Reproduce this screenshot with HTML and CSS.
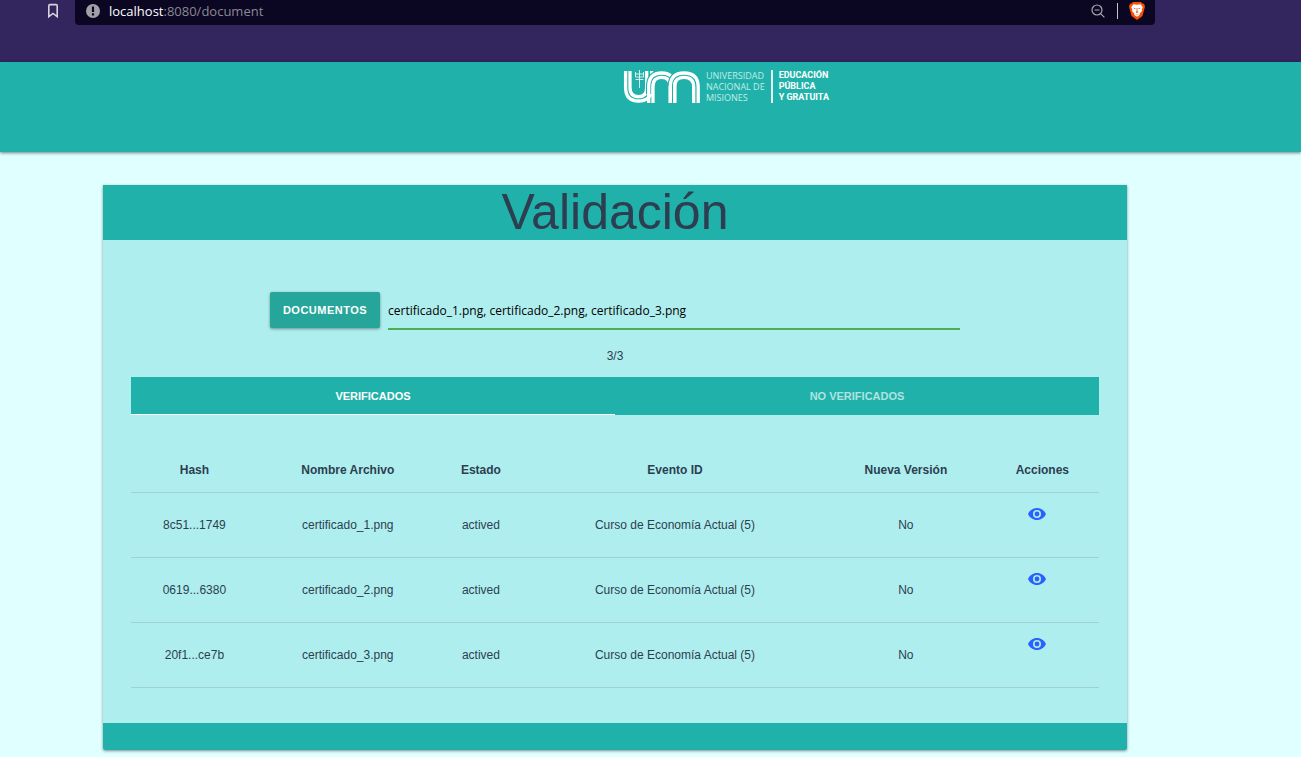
FILE: index.html
```html
<!DOCTYPE html>
<html lang="es">
<head>
<meta charset="utf-8">
<title>Validación</title>
<link rel="stylesheet" href="styles.css">
</head>
<body>
<div class="browser">
  <button class="icon-button bookmark" type="button" aria-label="Marcador">
    <svg width="12" height="16" viewBox="0 0 12 16" fill="none" stroke="#d6d3df" stroke-width="1.6"><path d="M1.8 13.6V2.8Q1.8 1.6 3 1.6H9Q10.200 1.600 10.200 2.800V13.600L6 10.400Z"/></svg>
  </button>
  <div class="address">
    <svg width="14" height="14" viewBox="0 0 14 14"><circle cx="7" cy="7" r="7" fill="#a0a1a8"/><path d="M5.900 2.500H8.100V8H5.900ZM5.900 9.300H8.100V11.500H5.900Z" fill="#0b0622"/></svg>
    <div class="url"><span class="host">localhost</span>:8080/document</div>
    <button class="icon-button" type="button" aria-label="Zoom">
      <svg width="14" height="14" viewBox="0 0 14 14" fill="none" stroke="#aaa8b4" stroke-width="1.200"><circle cx="6" cy="6" r="5"/><path d="M3.500 6H8.500M9.600 9.600L13.400 13.400"/></svg>
    </button>
    <span class="divider"></span>
    <button class="icon-button" type="button" aria-label="Brave">
      <svg width="16" height="18" viewBox="0 0 16 18"><path d="M4 0H12L13.500 1.500L15 1.800L16 4.500L15.500 6.500L13.400 14L8 18L2.600 14L.5 6.500L0 4.500L1 1.800L2.500 1.500Z" fill="#fb5004"/><path d="M4.500 2.200L8 2.800L11.500 2.200L13.800 5.200L12.700 7.500L13 9L10.800 11.200L10.600 13L8 14.800L5.400 13L5.200 11.200L3 9L3.300 7.500L2.200 5.200Z" fill="#fff"/><path d="M4 5.800L6.600 6.200L6.200 7.200ZM12 5.800L9.400 6.200L9.800 7.200ZM7.600 6H8.400V9.300L9.600 10L8 10.900L6.400 10L7.600 9.300ZM6 12L8 12.700L10 12L8 13.200Z" fill="#c9541f"/></svg>
    </button>
  </div>
</div>

<header class="topbar">
  <a class="brand" href="#">
    <svg width="78" height="34" viewBox="0 0 78 34" fill="none" stroke="#fff" stroke-width="3.300">
      <path d="M2.600 1V17.500Q2.600 31 15.500 31Q28.700 31 28.700 17.500V1"/>
      <path d="M7 1V17.500Q7 26.700 15.500 26.700Q23.700 26.700 23.700 17.500V1"/>
      <path stroke="#20b2aa" stroke-width="5.500" d="M25.700 24V17Q25.700 3 38.700 3Q45 3 48.500 7"/>
      <path d="M25.700 33V17Q25.700 3 38.700 3Q51.700 3 51.700 17V33"/>
      <path d="M30 33V17Q30 7.300 38.700 7.300Q47.300 7.300 47.300 17V33"/>
      <path stroke="#20b2aa" stroke-width="5.500" d="M47.300 16Q47.600 3 61 3"/>
      <path d="M47.300 33V17Q47.300 3 61 3Q75.200 3 75.200 17V33"/>
      <path d="M51.700 33V17Q51.700 7.300 61 7.300Q70.700 7.300 70.700 17V33"/>
      <path stroke-width="1" stroke-opacity=".8" d="M16.500 0V18M12.500 2V7H20.500V2M12.500 4H20.500M12.500 9.500H20.500"/>
    </svg>
    <span class="name">UNIVERSIDAD<br>NACIONAL DE<br>MISIONES</span>
    <span class="motto">EDUCACIÓN<br>PÚBLICA<br>Y GRATUITA</span>
  </a>
</header>

<main class="page">
  <section class="card">
    <h1 class="title">Validación</h1>
    <div class="body">
      <div class="file-row">
        <button class="upload" type="button">DOCUMENTOS</button>
        <input class="files" type="text" aria-label="Documentos" value="certificado_1.png, certificado_2.png, certificado_3.png">
      </div>
      <p class="count">3/3</p>
      <nav class="tabs">
        <a class="tab active" href="#verificados">VERIFICADOS</a>
        <a class="tab" href="#no-verificados">NO VERIFICADOS</a>
      </nav>
      <table class="results" id="verificados">
        <colgroup><col class="c-hash"><col class="c-file"><col class="c-state"><col class="c-event"><col class="c-version"><col class="c-actions"></colgroup>
        <thead>
          <tr><th>Hash</th><th>Nombre Archivo</th><th>Estado</th><th>Evento ID</th><th>Nueva Versión</th><th>Acciones</th></tr>
        </thead>
        <tbody>
          <tr><td>8c51...1749</td><td>certificado_1.png</td><td>actived</td><td>Curso de Economía Actual (5)</td><td>No</td><td class="actions"><button class="icon-button" type="button" aria-label="Ver certificado_1.png"><svg width="18" height="12" viewBox="0 0 18 12"><path fill="#2962ff" fill-rule="evenodd" d="M9 0C5 0 1.600 2.500 0 6C1.600 9.500 5 12 9 12S16.400 9.500 18 6C16.400 2.500 13 0 9 0ZM9 10A4 4 0 1 1 9 2A4 4 0 0 1 9 10ZM9 3.600A2.400 2.400 0 1 0 9 8.400A2.400 2.400 0 0 0 9 3.600Z"/></svg></button></td></tr>
          <tr><td>0619...6380</td><td>certificado_2.png</td><td>actived</td><td>Curso de Economía Actual (5)</td><td>No</td><td class="actions"><button class="icon-button" type="button" aria-label="Ver certificado_2.png"><svg width="18" height="12" viewBox="0 0 18 12"><path fill="#2962ff" fill-rule="evenodd" d="M9 0C5 0 1.600 2.500 0 6C1.600 9.500 5 12 9 12S16.400 9.500 18 6C16.400 2.500 13 0 9 0ZM9 10A4 4 0 1 1 9 2A4 4 0 0 1 9 10ZM9 3.600A2.400 2.400 0 1 0 9 8.400A2.400 2.400 0 0 0 9 3.600Z"/></svg></button></td></tr>
          <tr><td>20f1...ce7b</td><td>certificado_3.png</td><td>actived</td><td>Curso de Economía Actual (5)</td><td>No</td><td class="actions"><button class="icon-button" type="button" aria-label="Ver certificado_3.png"><svg width="18" height="12" viewBox="0 0 18 12"><path fill="#2962ff" fill-rule="evenodd" d="M9 0C5 0 1.600 2.500 0 6C1.600 9.500 5 12 9 12S16.400 9.500 18 6C16.400 2.500 13 0 9 0ZM9 10A4 4 0 1 1 9 2A4 4 0 0 1 9 10ZM9 3.600A2.400 2.400 0 1 0 9 8.400A2.400 2.400 0 0 0 9 3.600Z"/></svg></button></td></tr>
        </tbody>
      </table>
    </div>
    <footer class="card-footer"></footer>
  </section>
</main>
</body>
</html>
```

FILE: styles.css
```css
* { box-sizing: border-box; }

body {
  margin: 0;
  background: #e0ffff;
  color: #2c3e50;
  font-family: "Liberation Sans", Arial, sans-serif;
  font-size: 12px;
}

svg { display: block; }

.icon-button {
  padding: 0;
  border: 0;
  background: none;
  cursor: pointer;
}

/* Browser bar */
.browser {
  display: flex;
  align-items: flex-start;
  gap: 16px;
  height: 62px;
  padding-right: 146px;
  padding-left: 47px;
  background: #33265f;
}

.bookmark { padding-top: 3px; }

.address {
  display: flex;
  flex: 1;
  align-items: center;
  height: 25px;
  padding: 0 10px 3px 11px;
  border-radius: 0 0 4px 4px;
  background: #0b0622;
}

.url {
  flex: 1;
  margin-left: 9px;
  color: #8b8994;
  font-family: "Open Sans", "Noto Sans", sans-serif;
  font-size: 13px;
  line-height: 20px;
}

.host { color: #fff; }

.divider {
  width: 1px;
  height: 16px;
  margin: 0 11px 0 12px;
  background: #c5c3cc;
}

/* Page header */
.topbar {
  position: relative;
  display: flex;
  justify-content: center;
  height: 90px;
  padding: 8px 0 0 151px;
  background: #20b2aa;
  box-shadow: 0 1px 3px rgba(0, 0, 0, .5);
}

.brand {
  display: flex;
  align-items: flex-start;
  color: #fff;
  font-family: "Open Sans", "Noto Sans", sans-serif;
  font-size: 9px;
  line-height: 11px;
  text-decoration: none;
}

.name {
  margin-left: 5px;
  color: #c4eae8;
}

.motto {
  margin-left: 6px;
  padding-left: 6px;
  border-left: 2px solid #e3f5f4;
  font-family: Roboto, sans-serif;
  font-weight: 700;
}

/* Card */
.page { padding: 33px 174px 7px 103px; }

.card {
  overflow: hidden;
  border-radius: 0 0 2px 2px;
  background: #afeeee;
  box-shadow: 0 1px 3px rgba(0, 0, 0, .45);
}

.title {
  margin: 0;
  background: #20b2aa;
  font-size: 50px;
  font-weight: 400;
  line-height: 55px;
  text-align: center;
}

.body { padding: 52px 28px 35px; }

.file-row {
  display: flex;
  gap: 8px;
  margin: 0 139px;
}

.upload {
  width: 110px;
  height: 36px;
  padding: 0;
  border: 0;
  border-radius: 2px;
  background: #26a69a;
  box-shadow: 0 1px 3px rgba(0, 0, 0, .4);
  color: #fff;
  font: 700 11px "Liberation Sans", Arial, sans-serif;
  letter-spacing: .5px;
}

.files {
  flex: 1;
  min-width: 0;
  height: 38px;
  padding: 0;
  border: 0;
  border-bottom: 2px solid #4caf50;
  outline: 0;
  background: none;
  color: #000;
  font-family: "Open Sans", "Noto Sans", sans-serif;
  font-size: 12px;
}

.count {
  margin: 18px 0 13px;
  line-height: 16px;
  text-align: center;
}

.tabs {
  display: flex;
  background: #20b2aa;
}

.tab {
  flex: 1;
  height: 38px;
  border-bottom: 1px solid transparent;
  color: #b0e3e0;
  font-size: 11px;
  font-weight: 700;
  line-height: 38px;
  text-align: center;
  text-decoration: none;
}

.active {
  border-bottom-color: #fff;
  color: #fff;
}

.results {
  width: 100%;
  margin-top: 34px;
  border-collapse: collapse;
  table-layout: fixed;
  text-align: center;
}

.results tr { border-bottom: 1px solid #9dd3d5; }

.results th {
  height: 43px;
  padding: 0;
}

.results td {
  height: 65px;
  padding: 0;
}

.results .actions {
  padding: 15px 10px 0 0;
  vertical-align: top;
}

.c-hash { width: 13.1%; }
.c-file { width: 18.6%; }
.c-state { width: 8.9%; }
.c-event { width: 31.2%; }
.c-version { width: 16.5%; }
.c-actions { width: 11.7%; }

.card-footer {
  height: 27px;
  background: #20b2aa;
}
```
